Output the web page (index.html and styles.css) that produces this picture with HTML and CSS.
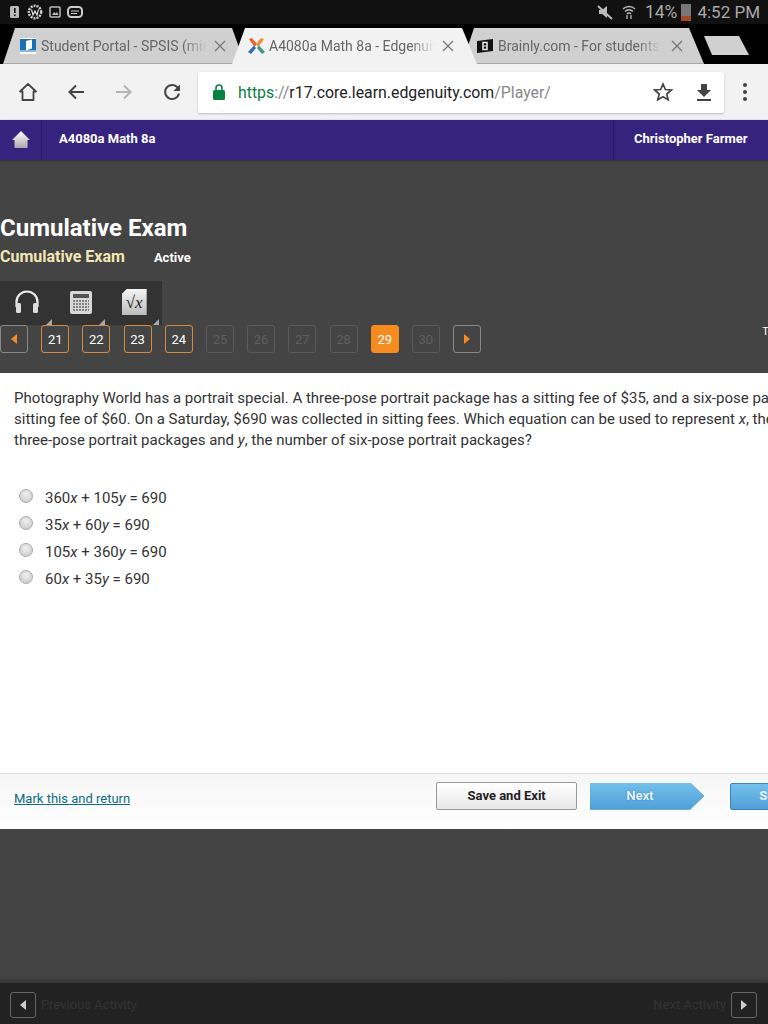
FILE: index.html
```html
<!DOCTYPE html>
<html lang="en">
  <head>
    <title>A4080a Math 8a - Edgenuity</title>
    <meta name="viewport" content="width=device-width, initial-scale=1.0" />
    <link rel="stylesheet" href="styles.css">
  </head>

  <body>
    <div class="statusBar">
      <div class="statusIcons">
        <svg width="12" height="14" viewBox="0 0 12 14"><rect x="1" y="1" width="9" height="12" rx="1.5" fill="#bbb"/><rect x="5" y="3" width="1.6" height="5" fill="#111"/><rect x="5" y="9.5" width="1.6" height="1.6" fill="#111"/></svg>
        <svg width="16" height="16" viewBox="0 0 16 16"><circle cx="8" cy="8" r="6.2" fill="none" stroke="#ccc" stroke-width="2.4" stroke-dasharray="2 1"/><path d="M4.5 5.5 6 11l2-4 2 4 1.5-5.500" fill="none" stroke="#ddd" stroke-width="1.200"/></svg>
        <svg width="12" height="12" viewBox="0 0 12 12"><rect x="1" y="1" width="10" height="10" rx="1" fill="none" stroke="#bbb" stroke-width="1.500"/><path d="M3 9l2-3 1.500 1.500L8 6l1.500 3z" fill="#bbb"/></svg>
        <svg width="16" height="12" viewBox="0 0 16 12"><rect x="1" y="1" width="14" height="10" rx="3.500" fill="none" stroke="#ccc" stroke-width="2"/><path d="M4 5h8M4 7.500h6" stroke="#ccc" stroke-width="1.200"/></svg>
      </div>
      <div class="statusRight">
        <svg width="16" height="16" viewBox="0 0 16 16"><path d="M2 6h3l5-4v12l-5-4H2z" fill="#bbb"/><path d="M1 2l14 13" stroke="#bbb" stroke-width="2"/></svg>
        <svg class="wifi" width="14" height="16" viewBox="0 0 14 16"><path d="M1 5a8.500 8.500 0 0 1 12 0M3 7.500a5.500 5.500 0 0 1 8 0M5 10a2.500 2.500 0 0 1 4 0" fill="none" stroke="#bbb" stroke-width="1.300"/><path d="M5 11v4M9 11v4" stroke="#bbb" stroke-width="1.300"/></svg>
        <span class="battPct">14%</span>
        <span class="battery"></span>
        <span>4:52 PM</span>
      </div>
    </div>

    <div class="tabStrip">
      <div class="tab tab1">
        <svg width="16" height="16" viewBox="0 0 16 16"><rect width="16" height="16" fill="#fff"/><rect y="1" width="16" height="11" fill="#1a6fb5"/><path d="M6 3l6-1.500v9L6 12.500z" fill="#fff"/><rect y="12" width="16" height="2" fill="#8fb9dc"/></svg>
        <span class="tabTitle">Student Portal - SPSIS (mini</span>
        <svg class="tabClose" width="12" height="12" viewBox="0 0 12 12"><path d="M1 1l10 10M11 1L1 11"/></svg>
      </div>
      <div class="tab tab2">
        <svg width="17" height="16" viewBox="0 0 17 16"><path d="M1 1l3-1 5 6-2.500 3z" fill="#e8622a"/><path d="M16 1l-3-1-5 6 2.500 3z" fill="#f0903a"/><path d="M0 14l3 2 5-6-2-2.500z" fill="#2f6db5"/><path d="M17 14l-3 2-5-6 2-2.500z" fill="#3a9a8c"/></svg>
        <span class="tabTitle">A4080a Math 8a - Edgenuity</span>
        <svg class="tabClose" width="12" height="12" viewBox="0 0 12 12"><path d="M1 1l10 10M11 1L1 11"/></svg>
      </div>
      <div class="tab tab3">
        <svg width="16" height="16" viewBox="0 0 16 16"><path d="M0 3l16-2v12L0 15z" fill="#111"/><path d="M6 4.500h4v7H6z" fill="none" stroke="#eee" stroke-width="1.500"/><path d="M6 8h4" stroke="#eee" stroke-width="1.200"/></svg>
        <span class="tabTitle">Brainly.com - For students.</span>
        <svg class="tabClose" width="12" height="12" viewBox="0 0 12 12"><path d="M1 1l10 10M11 1L1 11"/></svg>
      </div>
      <div class="newTab"></div>
    </div>

    <div class="toolbar">
      <svg class="toolIcon" width="20" height="20" viewBox="0 0 20 20"><path d="M10 2L2 9.500h2.500V18h11V9.500H18z" fill="none" stroke="#444" stroke-width="1.800" stroke-linejoin="round"/></svg>
      <svg class="toolIcon" width="20" height="20" viewBox="0 0 20 20"><path d="M18 10H4M10 3.500L3.500 10l6.500 6.500" fill="none" stroke="#444" stroke-width="2"/></svg>
      <svg class="toolIcon" width="20" height="20" viewBox="0 0 20 20"><path d="M2 10h14M10 3.500l6.500 6.500-6.500 6.500" fill="none" stroke="#b4b4b4" stroke-width="2"/></svg>
      <svg class="toolIcon" width="20" height="20" viewBox="0 0 20 20"><path d="M16.500 7A7 7 0 1 0 17 11.500" fill="none" stroke="#444" stroke-width="2"/><path d="M18 2.500V9h-6.500z" fill="#444"/></svg>
      <div class="omnibox">
        <svg width="12" height="16" viewBox="0 0 12 16"><rect y="6" width="12" height="10" rx="1.500" fill="#0b8043"/><path d="M3 7V4a3 3 0 0 1 6 0v3" fill="none" stroke="#0b8043" stroke-width="1.600"/></svg>
        <span class="url"><span class="urlScheme">https</span><span class="urlDim">://</span>r17.core.learn.edgenuity.com<span class="urlDim">/Player/</span></span>
        <svg class="star" width="20" height="20" viewBox="0 0 20 20"><path d="M10 2l2.400 5.500 6 .5-4.600 4 1.400 5.800L10 14.800l-5.200 3L6.200 12 1.600 8l6-.5z" fill="none" stroke="#444" stroke-width="1.700"/></svg>
        <svg class="download" width="14" height="17" viewBox="0 0 14 17"><path d="M4 0h6v6h4l-7 7-7-7h4z" fill="#444"/><rect y="15" width="14" height="2" fill="#444"/></svg>
      </div>
      <div class="menuDots"><span></span><span></span><span></span></div>
    </div>

    <nav class="courseBar">
      <div class="homeCell">
        <svg width="20" height="20" viewBox="0 0 20 20"><defs><linearGradient id="homeFill" x1="0" y1="0" x2="0" y2="1"><stop offset="0" stop-color="#fff"/><stop offset="1" stop-color="#a9a9ad"/></linearGradient></defs><path d="M10 1l9 9h-2.500v8h-13v-8H1z" fill="url(#homeFill)"/></svg>
      </div>
      <div class="courseName">A4080a Math 8a</div>
      <div class="userName">Christopher Farmer</div>
    </nav>

    <section class="examPanel">
      <h1>Cumulative Exam</h1>
      <div class="subHead">
        <span class="subTitle">Cumulative Exam</span>
        <span class="subStatus">Active</span>
      </div>
      <div class="tools">
        <div class="tool">
          <svg width="28" height="24" viewBox="0 0 28 24"><path d="M3.500 17v-5a10.500 10.500 0 0 1 21 0v5" fill="none" stroke="#ececec" stroke-width="2.200"/><rect x="3" y="13" width="5" height="10" rx="1.500" fill="#ddd"/><rect x="20" y="13" width="5" height="10" rx="1.500" fill="#ddd"/></svg>
        </div>
        <div class="tool">
          <svg width="22" height="23" viewBox="0 0 22 23"><rect width="22" height="23" rx="2" fill="#d8d8d8"/><rect x="3" y="3" width="16" height="4" fill="#555"/><path d="M3 10h16M3 13h16M3 16h16M3 19h16" stroke="#666" stroke-width="1.500" stroke-dasharray="2 1"/></svg>
        </div>
        <div class="tool">
          <div class="mathIcon">√<i>x</i></div>
        </div>
      </div>
      <div class="pager">
        <button class="pageBtn arrowBtn"><span class="arrowLeft"></span></button>
        <button class="pageBtn seen">21</button>
        <button class="pageBtn seen">22</button>
        <button class="pageBtn seen">23</button>
        <button class="pageBtn seen">24</button>
        <button class="pageBtn locked">25</button>
        <button class="pageBtn locked">26</button>
        <button class="pageBtn locked">27</button>
        <button class="pageBtn locked">28</button>
        <button class="pageBtn current">29</button>
        <button class="pageBtn locked">30</button>
        <button class="pageBtn arrowBtn"><span class="arrowRight"></span></button>
        <span class="timer">Time</span>
      </div>
    </section>

    <main class="questionPanel">
      <p class="question">
        Photography World has a portrait special. A three-pose portrait package has a sitting fee of $35, and a six-pose package has a<br>
        sitting fee of $60. On a Saturday, $690 was collected in sitting fees. Which equation can be used to represent <i>x</i>, the number of<br>
        three-pose portrait packages and <i>y</i>, the number of six-pose portrait packages?
      </p>
      <ul class="answers">
        <li><span class="radio"></span><span>360<i>x</i> + 105<i>y</i> = 690</span></li>
        <li><span class="radio"></span><span>35<i>x</i> + 60<i>y</i> = 690</span></li>
        <li><span class="radio"></span><span>105<i>x</i> + 360<i>y</i> = 690</span></li>
        <li><span class="radio"></span><span>60<i>x</i> + 35<i>y</i> = 690</span></li>
      </ul>
      <div class="actions">
        <a class="markLink" href="#">Mark this and return</a>
        <button class="saveBtn">Save and Exit</button>
        <div class="nextWrap"><button class="nextBtn">Next</button></div>
        <button class="submitBtn">Submit</button>
      </div>
    </main>

    <div class="gapPanel"></div>

    <footer class="activityBar">
      <button class="activityBtn"><span class="arrowLeft pale"></span></button>
      <span class="activityLabel">Previous Activity</span>
      <span class="activityLabel pushRight">Next Activity</span>
      <button class="activityBtn"><span class="arrowRight pale"></span></button>
    </footer>
  </body>
</html>
```

FILE: styles.css
```css
*,
*::before,
*::after {
  box-sizing: border-box;
}

* {
  margin: 0;
}

html, body {
  height: 1024px;
  overflow: hidden;
}

body {
  background-color: #444;
  color: #333;
  font-family: Roboto, 'Liberation Sans', sans-serif;
  display: flex;
  flex-direction: column;
  width: 768px;
}

button {
  font-family: inherit;
  padding: 0;
}

/* device status bar */
.statusBar {
  align-items: center;
  background-color: #111;
  color: #a9a9a9;
  display: flex;
  font-size: 17px;
  height: 24px;
  justify-content: space-between;
  padding-inline: 9px 8px;
}

.statusIcons, .statusRight {
  align-items: center;
  display: flex;
}

.statusIcons {
  gap: 6px;
}

.wifi {
  margin-left: 9px;
}

.battPct {
  font-size: 17.500px;
  margin-left: 9px;
}

.battery {
  background: linear-gradient(#777 70%, #a5482c 70%);
  height: 17px;
  margin-inline: 4px 6px;
  width: 10px;
}

/* browser tabs */
.tabStrip {
  align-items: flex-end;
  background-color: #000;
  display: flex;
  height: 40px;
  padding-left: 3px;
}

.tab {
  align-items: center;
  background-color: #d0d0d0;
  border-bottom: 1px solid #a8a8a8;
  color: #666;
  display: flex;
  font-size: 14px;
  height: 36px;
  width: 242px;
}

.tab1 {
  clip-path: polygon(12px 0, 229px 0, 242px 100%, 0 100%);
  padding-left: 17px;
}

.tab2 {
  background-color: #f2f2f2;
  border-bottom: 0;
  clip-path: polygon(13px 0, 230px 0, 245px 100%, 0 100%);
  margin-left: -13px;
  padding-left: 16px;
  position: relative;
  width: 245px;
  z-index: 2;
}

.tab3 {
  clip-path: polygon(12px 0, 227px 0, 242px 100%, 0 100%);
  margin-left: -15px;
  padding-left: 15px;
}

.tabTitle {
  -webkit-mask-image: linear-gradient(to right, #000 85%, transparent);
  margin-left: 5px;
  mask-image: linear-gradient(to right, #000 85%, transparent);
  overflow: hidden;
  white-space: nowrap;
  width: 166px;
}

.tab2 .tabTitle {
  margin-left: 4px;
}

.tab3 .tabTitle {
  width: 163px;
}

.tabClose {
  fill: none;
  margin-left: 7px;
  stroke: #777;
  stroke-width: 1.300;
}

.tab3 .tabClose {
  margin-left: 10px;
}

.newTab {
  align-self: flex-start;
  background-color: #d0d0d0;
  clip-path: polygon(0 0, 35px 0, 45px 100%, 8px 100%);
  height: 19px;
  margin: 12px 0 0 0;
  width: 45px;
}

/* browser toolbar */
.toolbar {
  align-items: center;
  background: linear-gradient(#f2f2f2 80%, #efeff7);
  display: flex;
  height: 56px;
  padding-left: 18px;
}

.toolIcon {
  margin-right: 28px;
}

.toolIcon:nth-child(4) {
  margin-right: 16px;
}

.omnibox {
  align-items: center;
  background-color: #fff;
  border-radius: 2px;
  box-shadow: 0 1px 2px #bbb;
  display: flex;
  height: 41px;
  padding-inline: 15px 13px;
  width: 526px;
}

.url {
  color: #222;
  font-size: 15.850px;
  margin-left: 13px;
  white-space: nowrap;
}

.urlScheme {
  color: #0b8043;
}

.urlDim {
  color: #888;
}

.star {
  margin-left: auto;
}

.download {
  margin-left: 24px;
}

.menuDots {
  display: flex;
  flex-direction: column;
  gap: 3px;
  margin-left: 19px;
}

.menuDots span {
  background-color: #444;
  border-radius: 50%;
  height: 4px;
  width: 4px;
}

/* course bar */
.courseBar {
  align-items: center;
  background-color: #35237d;
  box-shadow: 0 1px 2px #333;
  color: #fff;
  display: flex;
  font-size: 13px;
  font-weight: bold;
  height: 40px;
  position: relative;
}

.homeCell {
  align-items: center;
  align-self: stretch;
  border-right: 1px solid #2a1b66;
  display: flex;
  justify-content: center;
  width: 42px;
}

.courseName {
  margin-left: 17px;
  padding-bottom: 4px;
}

.userName {
  align-items: center;
  align-self: stretch;
  border-left: 1px solid #2a1b66;
  display: flex;
  margin-left: auto;
  padding: 0 20px 4px;
  width: 155px;
  white-space: nowrap;
}

/* exam header */
.examPanel {
  background-color: #444;
  color: #fff;
  height: 213px;
  overflow: hidden;
  padding-top: 53px;
}

h1 {
  font-size: 24px;
  font-weight: bold;
  line-height: 30px;
}

.subHead {
  align-items: baseline;
  display: flex;
  margin-top: 2px;
}

.subTitle {
  color: #f2e6b4;
  font-size: 16px;
  font-weight: bold;
  line-height: 24px;
}

.subStatus {
  font-size: 13px;
  font-weight: bold;
  margin-left: 29px;
}

.tools {
  background-color: #333;
  display: flex;
  height: 44px;
  margin-top: 12px;
  padding-right: 1px;
  width: 162px;
}

.tool {
  align-items: center;
  display: flex;
  flex: 1;
  justify-content: center;
  padding-bottom: 2px;
  position: relative;
}

.tool::after {
  border-bottom: 6px solid #aaa;
  border-left: 6px solid transparent;
  bottom: 0;
  content: "";
  position: absolute;
  right: 2px;
}

.mathIcon {
  background: linear-gradient(#f5f5f5, #bbb);
  clip-path: polygon(5px 0, 100% 0, 100% 100%, 0 100%, 0 5px);
  color: #222;
  font-family: 'Liberation Serif', serif;
  font-size: 17px;
  height: 26px;
  line-height: 28px;
  text-align: center;
  width: 25px;
}

.pager {
  align-items: center;
  display: flex;
  gap: 13.200px;
  white-space: nowrap;
}

.pageBtn {
  background: none;
  border: 1px solid #888;
  border-radius: 3px;
  color: #fff;
  flex: none;
  font-size: 13px;
  height: 28px;
  width: 28px;
}

.seen {
  border-color: #d68a3f;
}

.locked {
  border-color: #5a5a5a;
  color: #5f5f5f;
}

.current {
  background-color: #f68b1f;
  border-color: #f68b1f;
}

.arrowBtn {
  align-items: center;
  display: flex;
  justify-content: center;
}

.arrowLeft, .arrowRight {
  border-bottom: 5px solid transparent;
  border-top: 5px solid transparent;
  display: block;
}

.arrowLeft {
  border-right: 6px solid #f68b1f;
}

.arrowRight {
  border-left: 6px solid #f68b1f;
}

.arrowLeft.pale {
  border-right-color: #ccc;
}

.arrowRight.pale {
  border-left-color: #ccc;
}

.timer {
  align-self: flex-start;
  font-size: 11px;
  margin-left: 268px;
}

/* question */
.questionPanel {
  background-color: #fff;
  display: flex;
  flex-direction: column;
  height: 456px;
  overflow: hidden;
}

.question {
  font-size: 15px;
  line-height: 21px;
  padding: 15px 0 0 14px;
  white-space: nowrap;
}

.answers {
  display: flex;
  flex-direction: column;
  font-size: 15px;
  gap: 7px;
  list-style: none;
  margin-top: 37px;
  padding: 0 0 0 19px;
}

.answers li {
  align-items: center;
  display: flex;
  height: 20px;
}

.radio {
  background: radial-gradient(circle at 50% 35%, #f0f0f0, #c4c4c4);
  border: 1px solid #aaa;
  border-radius: 50%;
  height: 14px;
  margin-right: 12px;
  margin-top: -5px;
  width: 14px;
}

.actions {
  align-items: center;
  background: linear-gradient(#f6f6f6, #fff);
  border-top: 1px solid #ddd;
  display: flex;
  height: 56px;
  margin-top: auto;
  padding: 0 0 11px 14px;
  white-space: nowrap;
}

.markLink {
  color: #0b6d85;
  font-size: 13px;
  margin-top: 4px;
}

.saveBtn {
  background: linear-gradient(#fff, #e8e8e8);
  border: 1px solid #999;
  border-radius: 2px;
  color: #222;
  flex: none;
  font-size: 13px;
  font-weight: bold;
  height: 28px;
  margin-left: 306px;
  padding-bottom: 2px;
  width: 141px;
}

.nextWrap {
  filter: drop-shadow(0 0 0.6px #2f78ad);
  flex: none;
  margin-left: 13px;
}

.nextBtn {
  background: linear-gradient(#74c0ec, #4f9fd8);
  border: 0;
  clip-path: polygon(0 0, 100px 0, 114px 50%, 100px 100%, 0 100%);
  color: #e6f2fa;
  display: block;
  font-size: 13px;
  font-weight: bold;
  height: 27px;
  padding: 0 14px 2px 0;
  text-shadow: 0 0 2px #3c85ba;
  width: 114px;
}

.submitBtn {
  background: linear-gradient(#74c0ec, #4f9fd8);
  border: 1px solid #3c85ba;
  border-radius: 2px;
  color: #e6f2fa;
  flex: none;
  font-size: 13px;
  font-weight: bold;
  height: 27px;
  margin-left: 26px;
  padding-bottom: 2px;
  width: 100px;
}

/* activity footer */
.gapPanel {
  background: linear-gradient(#444 96%, #363636);
  flex: 1;
}

.activityBar {
  align-items: center;
  background-color: #222;
  display: flex;
  height: 41px;
  padding: 2px 11px 0 10px;
}

.activityBtn {
  align-items: center;
  background-color: #222;
  border: 1px solid #666;
  border-radius: 3px;
  display: flex;
  height: 26px;
  justify-content: center;
  width: 26px;
}

.activityLabel {
  color: #333;
  font-size: 13px;
  margin-inline: 5px;
}

.pushRight {
  margin-left: auto;
}
```
